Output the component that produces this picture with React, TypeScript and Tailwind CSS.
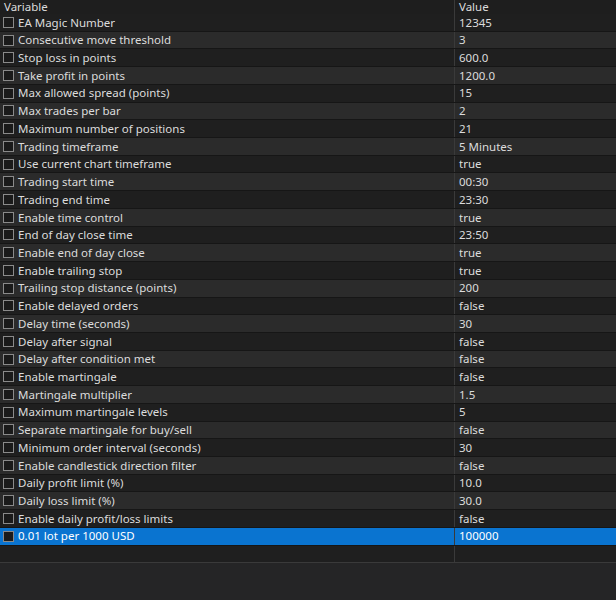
const rows: [string, string][] = [
["EA Magic Number","12345"],["Consecutive move threshold","3"],["Stop loss in points","600.0"],["Take profit in points","1200.0"],["Max allowed spread (points)","15"],["Max trades per bar","2"],["Maximum number of positions","21"],["Trading timeframe","5 Minutes"],["Use current chart timeframe","true"],["Trading start time","00:30"],["Trading end time","23:30"],["Enable time control","true"],["End of day close time","23:50"],["Enable end of day close","true"],["Enable trailing stop","true"],["Trailing stop distance (points)","200"],["Enable delayed orders","false"],["Delay time (seconds)","30"],["Delay after signal","false"],["Delay after condition met","false"],["Enable martingale","false"],["Martingale multiplier","1.5"],["Maximum martingale levels","5"],["Separate martingale for buy/sell","false"],["Minimum order interval (seconds)","30"],["Enable candlestick direction filter","false"],["Daily profit limit (%)","10.0"],["Daily loss limit (%)","30.0"],["Enable daily profit/loss limits","false"],["0.01 lot per 1000 USD","100000"]];
export default function App(){
  return <div className="w-[616px] h-[600px] bg-[#252526] text-[#dcdcdc] text-[11.5px] leading-none overflow-hidden" style={{fontFamily:'"Noto Sans","Open Sans",sans-serif'}}>
    <div className="flex h-[14px] bg-[#1e1e1e]">
      <div className="w-[455px] pl-[4px] border-r border-[#3a3a3a] flex items-center">Variable</div>
      <div className="flex-1 pl-[4px] flex items-center">Value</div>
    </div>
    {rows.map(([k,v],i)=>{const sel=i===rows.length-1;return <div key={i} className={`flex h-[17.72px] border-b border-[#161616] ${sel?"bg-[#0a74d0] text-white":i%2?"bg-[#2b2b2b]":"bg-[#1f1f1f]"}`}>
      <div className="w-[455px] flex items-center border-r border-[#3a3a3a]">
        <span className="ml-[3px] w-[11px] h-[11px] border border-[#8a8a8a] bg-[#1a1a1a] mr-[4px]"></span>
        <span>{k}</span>
      </div>
      <div className="flex-1 pl-[4px] flex items-center">{v}</div>
    </div>})}
    <div className="flex h-[17.7px] bg-[#1f1f1f] border-b border-[#3a3a3a]">
      <div className="w-[455px] border-r border-[#3a3a3a]"></div>
    </div>
  </div>;
}
